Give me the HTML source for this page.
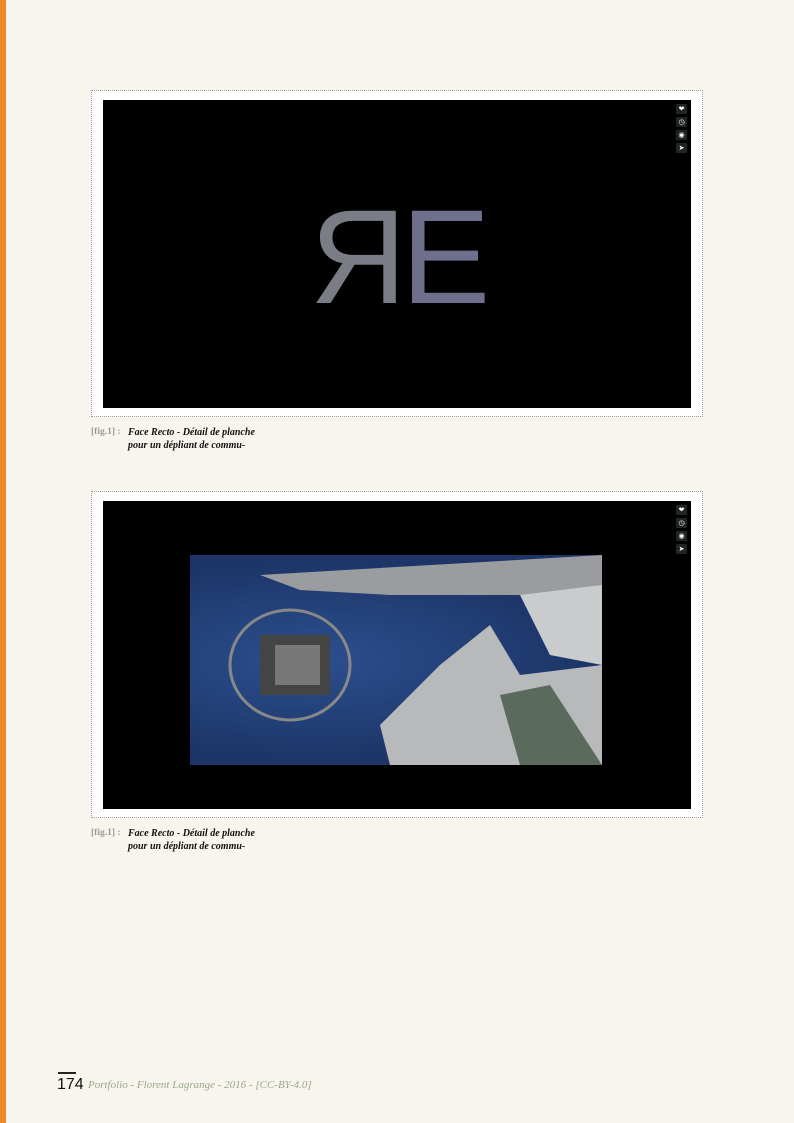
<!DOCTYPE html>
<html><head><meta charset="utf-8"><style>
body{margin:0;width:794px;height:1123px;background:#f8f5ee;position:relative;overflow:hidden;font-family:"Liberation Serif",serif}
.bar{position:absolute;left:0;top:0;width:6px;height:1123px;background:#ef8a2a}
.frame{position:absolute;left:91px;width:612px;height:327px;border:1px dotted #999;background:#fff;box-sizing:border-box}
.blk{position:absolute;left:11px;top:9px;width:588px;height:308px;background:#000}
.ic{position:absolute;right:4px;width:11px;height:10px;background:#1e2624;border-radius:1px;color:#fff;font-size:7px;line-height:10px;text-align:center;font-family:"DejaVu Sans",sans-serif}
.cap{position:absolute;left:91px;font-size:10px;line-height:13px;white-space:nowrap}
.cap b{color:#999;font-weight:bold;position:absolute;left:0;top:0;font-size:9.5px}
.cap i{position:absolute;left:37px;top:0;font-weight:bold;color:#111}
.L{position:absolute;font-family:"Liberation Sans",sans-serif;font-size:134px;line-height:100px;height:110px;overflow:hidden;color:#6e7088}
.scene{position:absolute;left:87px;top:54px;width:412px;height:210px;background:radial-gradient(ellipse at 30% 50%,#2c4f8e,#1c3466 70%)}
</style></head><body>
<div class="bar"></div>
<div class="frame" style="top:90px"><div class="blk">
<div class="ic" style="top:4px">❤</div><div class="ic" style="top:17px">◷</div><div class="ic" style="top:30px">◉</div><div class="ic" style="top:43px">➤</div>
<div class="L" style="left:207px;top:108px;transform:scaleX(-1);color:#7a7c86">R</div>
<div class="L" style="left:298px;top:108px;color:#6d6f8c">E</div>
</div></div>
<div class="cap" style="top:426px"><b>[fig.1] :</b><i>Face Recto - Détail de planche<br>pour un dépliant de commu-</i></div>

<div class="frame" style="top:491px"><div class="blk">
<div class="ic" style="top:4px">❤</div><div class="ic" style="top:17px">◷</div><div class="ic" style="top:30px">◉</div><div class="ic" style="top:43px">➤</div>
<div class="scene">
<svg width="412" height="210" style="position:absolute;left:0;top:0">
<polygon points="70,20 412,0 412,40 200,40 110,35" fill="#9a9ca0"/>
<polygon points="330,40 412,30 412,110 360,100" fill="#c8cccc"/>
<polygon points="250,110 300,70 330,120 412,110 412,210 200,210 190,170" fill="#b8b9bb"/>
<polygon points="310,140 360,130 412,210 330,210" fill="#5a6a5c"/>
<ellipse cx="100" cy="110" rx="60" ry="55" fill="none" stroke="#888" stroke-width="3"/>
<rect x="70" y="80" width="70" height="60" fill="#444"/>
<rect x="85" y="90" width="45" height="40" fill="#777"/>
</svg></div>
</div></div>
<div class="cap" style="top:827px"><b>[fig.1] :</b><i>Face Recto - Détail de planche<br>pour un dépliant de commu-</i></div>

<div style="position:absolute;left:58px;top:1072px;width:18px;height:1.5px;background:#222"></div>
<div style="position:absolute;left:57px;top:1076px;font-family:'Liberation Sans',sans-serif;font-size:16px;line-height:18px;color:#111">174</div>
<div style="position:absolute;left:88px;top:1079px;font-size:11px;line-height:13px;color:#9aa88a;font-style:italic">Portfolio - Florent Lagrange - 2016 - [CC-BY-4.0]</div>
</body></html>
